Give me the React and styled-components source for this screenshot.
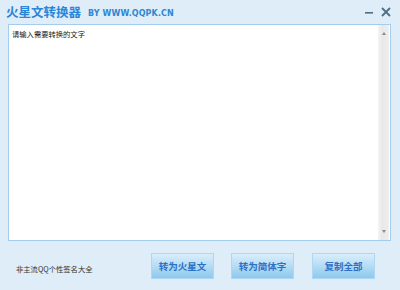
import React from "react"
import styled, { createGlobalStyle } from "styled-components"

const GlobalStyle = createGlobalStyle`
  html, body {
    margin: 0;
    padding: 0;
    background: #deedf8;
  }
`

const Window = styled.div`
  width: 400px;
  height: 290px;
  background: #deedf8;
  display: flex;
  flex-direction: column;
  font-family: "Liberation Sans", "Noto Sans CJK SC", sans-serif;
  overflow: hidden;
`

const TitleBar = styled.div`
  height: 24px;
  display: flex;
  align-items: center;
  padding: 0 6px;
`

const Title = styled.div`
  font-family: "Noto Sans CJK SC", sans-serif;
  font-size: 12.5px;
  font-weight: 700;
  color: #2a86d8;
  margin-top: -1px;
`

const SubTitle = styled.div`
  font-family: "DejaVu Sans", "Liberation Sans", sans-serif;
  font-size: 8px;
  font-weight: 700;
  color: #2f86d3;
  margin-left: 7px;
  margin-top: 2px;
  letter-spacing: 0.1px;
`

const Controls = styled.div`
  margin-left: auto;
  display: flex;
  align-items: center;
  gap: 7px;
  margin-right: 3px;
`

const Control = styled.svg`
  display: block;
  cursor: pointer;
`

const Editor = styled.div`
  margin: 0 9px 0 8px;
  height: 215px;
  border: 1px solid #a3cdee;
  background: #fff;
  display: flex;
`

const TextArea = styled.div`
  flex: 1;
  padding: 4px 3px;
  font-family: "Noto Sans CJK SC", sans-serif;
  font-size: 7.3px;
  color: #222;
  line-height: 10px;
`

const ScrollBar = styled.div`
  width: 11px;
  margin-right: 1px;
  background: linear-gradient(to right, #f4f4f4, #e8e8e8 40%, #eeeeee);
  display: flex;
  flex-direction: column;
  justify-content: space-between;
  align-items: center;
  padding: 7px 0;
`

const Arrow = styled.div`
  width: 0;
  height: 0;
  border-left: 2.5px solid transparent;
  border-right: 2.5px solid transparent;
  border-${(p) => (p.dir === "up" ? "bottom" : "top")}: 3px solid #8a8a8a;
`

const Footer = styled.div`
  flex: 1;
  display: flex;
  align-items: center;
  padding: 0 0 0 16px;
  margin-top: 1px;
`

const Link = styled.div`
  width: 135px;
  font-family: "Noto Sans CJK SC", sans-serif;
  font-size: 7.3px;
  color: #333;
  margin-top: 5px;
`

const Button = styled.div`
  width: 61px;
  height: 24px;
  margin-right: ${(p) => p.gap}px;
  border: 1px solid #b0d6f1;
  background: linear-gradient(to bottom, #d8eefb 0%, #b5dcf5 50%, #8dc9ef 100%);
  display: flex;
  align-items: center;
  justify-content: center;
  font-family: "Noto Sans CJK SC", sans-serif;
  font-size: 9.5px;
  font-weight: 700;
  color: #2d70c6;
  cursor: pointer;
`

const App = () => {
  return (
    <Window>
      <GlobalStyle />
      <TitleBar>
        <Title>火星文转换器</Title>
        <SubTitle>BY WWW.QQPK.CN</SubTitle>
        <Controls>
          <Control width="9" height="12" viewBox="0 0 9 12">
            <rect x="0" y="6" width="8" height="1.6" fill="#4d6e86" />
          </Control>
          <Control width="10" height="12" viewBox="0 0 10 12">
            <path d="M1 2 L9 10 M9 2 L1 10" stroke="#4d6e86" strokeWidth="1.8" />
          </Control>
        </Controls>
      </TitleBar>
      <Editor>
        <TextArea>请输入需要转换的文字</TextArea>
        <ScrollBar>
          <Arrow dir="up" />
          <Arrow dir="down" />
        </ScrollBar>
      </Editor>
      <Footer>
        <Link>非主流QQ个性签名大全</Link>
        <Button gap={17}>转为火星文</Button>
        <Button gap={18}>转为简体字</Button>
        <Button gap={0}>复制全部</Button>
      </Footer>
    </Window>
  )
}

export default App
